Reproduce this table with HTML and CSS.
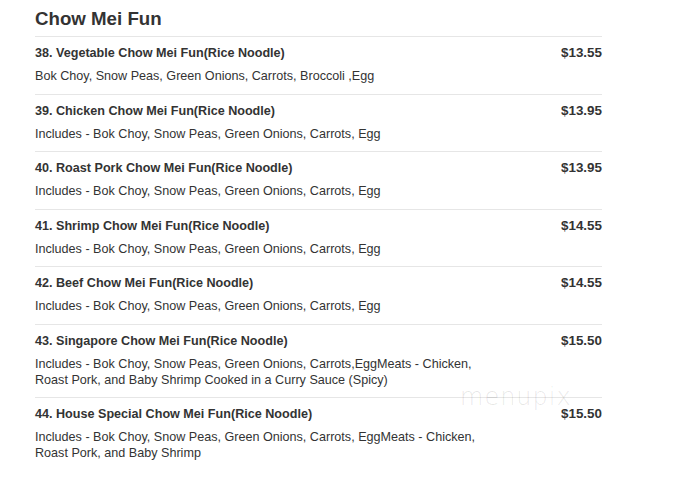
FILE: index.html
```html
<!DOCTYPE html>
<html>
<head>
<meta charset="utf-8">
<link rel="stylesheet" href="styles.css">
</head>
<body>
<div class="menu">
  <h2 class="section-title">Chow Mei Fun</h2>
  <div class="item">
    <div class="item-head"><span class="name">38. Vegetable Chow Mei Fun(Rice Noodle)</span><span class="price">$13.55</span></div>
    <div class="desc">Bok Choy, Snow Peas, Green Onions, Carrots, Broccoli ,Egg</div>
  </div>
  <div class="item">
    <div class="item-head"><span class="name">39. Chicken Chow Mei Fun(Rice Noodle)</span><span class="price">$13.95</span></div>
    <div class="desc">Includes - Bok Choy, Snow Peas, Green Onions, Carrots, Egg</div>
  </div>
  <div class="item">
    <div class="item-head"><span class="name">40. Roast Pork Chow Mei Fun(Rice Noodle)</span><span class="price">$13.95</span></div>
    <div class="desc">Includes - Bok Choy, Snow Peas, Green Onions, Carrots, Egg</div>
  </div>
  <div class="item">
    <div class="item-head"><span class="name">41. Shrimp Chow Mei Fun(Rice Noodle)</span><span class="price">$14.55</span></div>
    <div class="desc">Includes - Bok Choy, Snow Peas, Green Onions, Carrots, Egg</div>
  </div>
  <div class="item">
    <div class="item-head"><span class="name">42. Beef Chow Mei Fun(Rice Noodle)</span><span class="price">$14.55</span></div>
    <div class="desc">Includes - Bok Choy, Snow Peas, Green Onions, Carrots, Egg</div>
  </div>
  <div class="item">
    <div class="item-head"><span class="name">43. Singapore Chow Mei Fun(Rice Noodle)</span><span class="price">$15.50</span></div>
    <div class="desc">Includes - Bok Choy, Snow Peas, Green Onions, Carrots,EggMeats - Chicken,<br>Roast Pork, and Baby Shrimp Cooked in a Curry Sauce (Spicy)</div>
  </div>
  <div class="item item-last">
    <div class="item-head"><span class="name">44. House Special Chow Mei Fun(Rice Noodle)</span><span class="price">$15.50</span></div>
    <div class="desc">Includes - Bok Choy, Snow Peas, Green Onions, Carrots, EggMeats - Chicken,<br>Roast Pork, and Baby Shrimp</div>
  </div>
  <div class="watermark">menupix</div>
</div>
</body>
</html>
```
FILE: styles.css
```css
html, body {
  margin: 0;
  padding: 0;
  background: #fff;
}
body {
  font-family: "Liberation Sans", Arial, sans-serif;
  color: #333;
}
.menu {
  position: relative;
  width: 567px;
  margin-left: 35px;
}
.section-title {
  margin: 0;
  padding-top: 8px;
  height: 37px;
  box-sizing: border-box;
  font-size: 18.7px;
  font-weight: bold;
  line-height: 22px;
  color: #333;
  border-bottom: 1px solid #e6e6e6;
}
.item {
  border-bottom: 1px solid #e6e6e6;
  padding: 8px 0 9px 0;
}
.item-last {
  border-bottom: none;
}
.item-head {
  display: flex;
  justify-content: space-between;
  font-size: 12.6px;
  font-weight: bold;
  line-height: 16px;
}
.price {
  font-size: 13.4px;
}
.desc {
  margin-top: 8px;
  font-size: 12.6px;
  line-height: 15.6px;
}
.watermark {
  position: absolute;
  left: 425px;
  top: 385px;
  font-size: 24px;
  line-height: 24px;
  letter-spacing: 1px;
  font-family: "DejaVu Sans", sans-serif;
  font-weight: 200;
  color: rgba(0,0,0,0.1);
}
```
